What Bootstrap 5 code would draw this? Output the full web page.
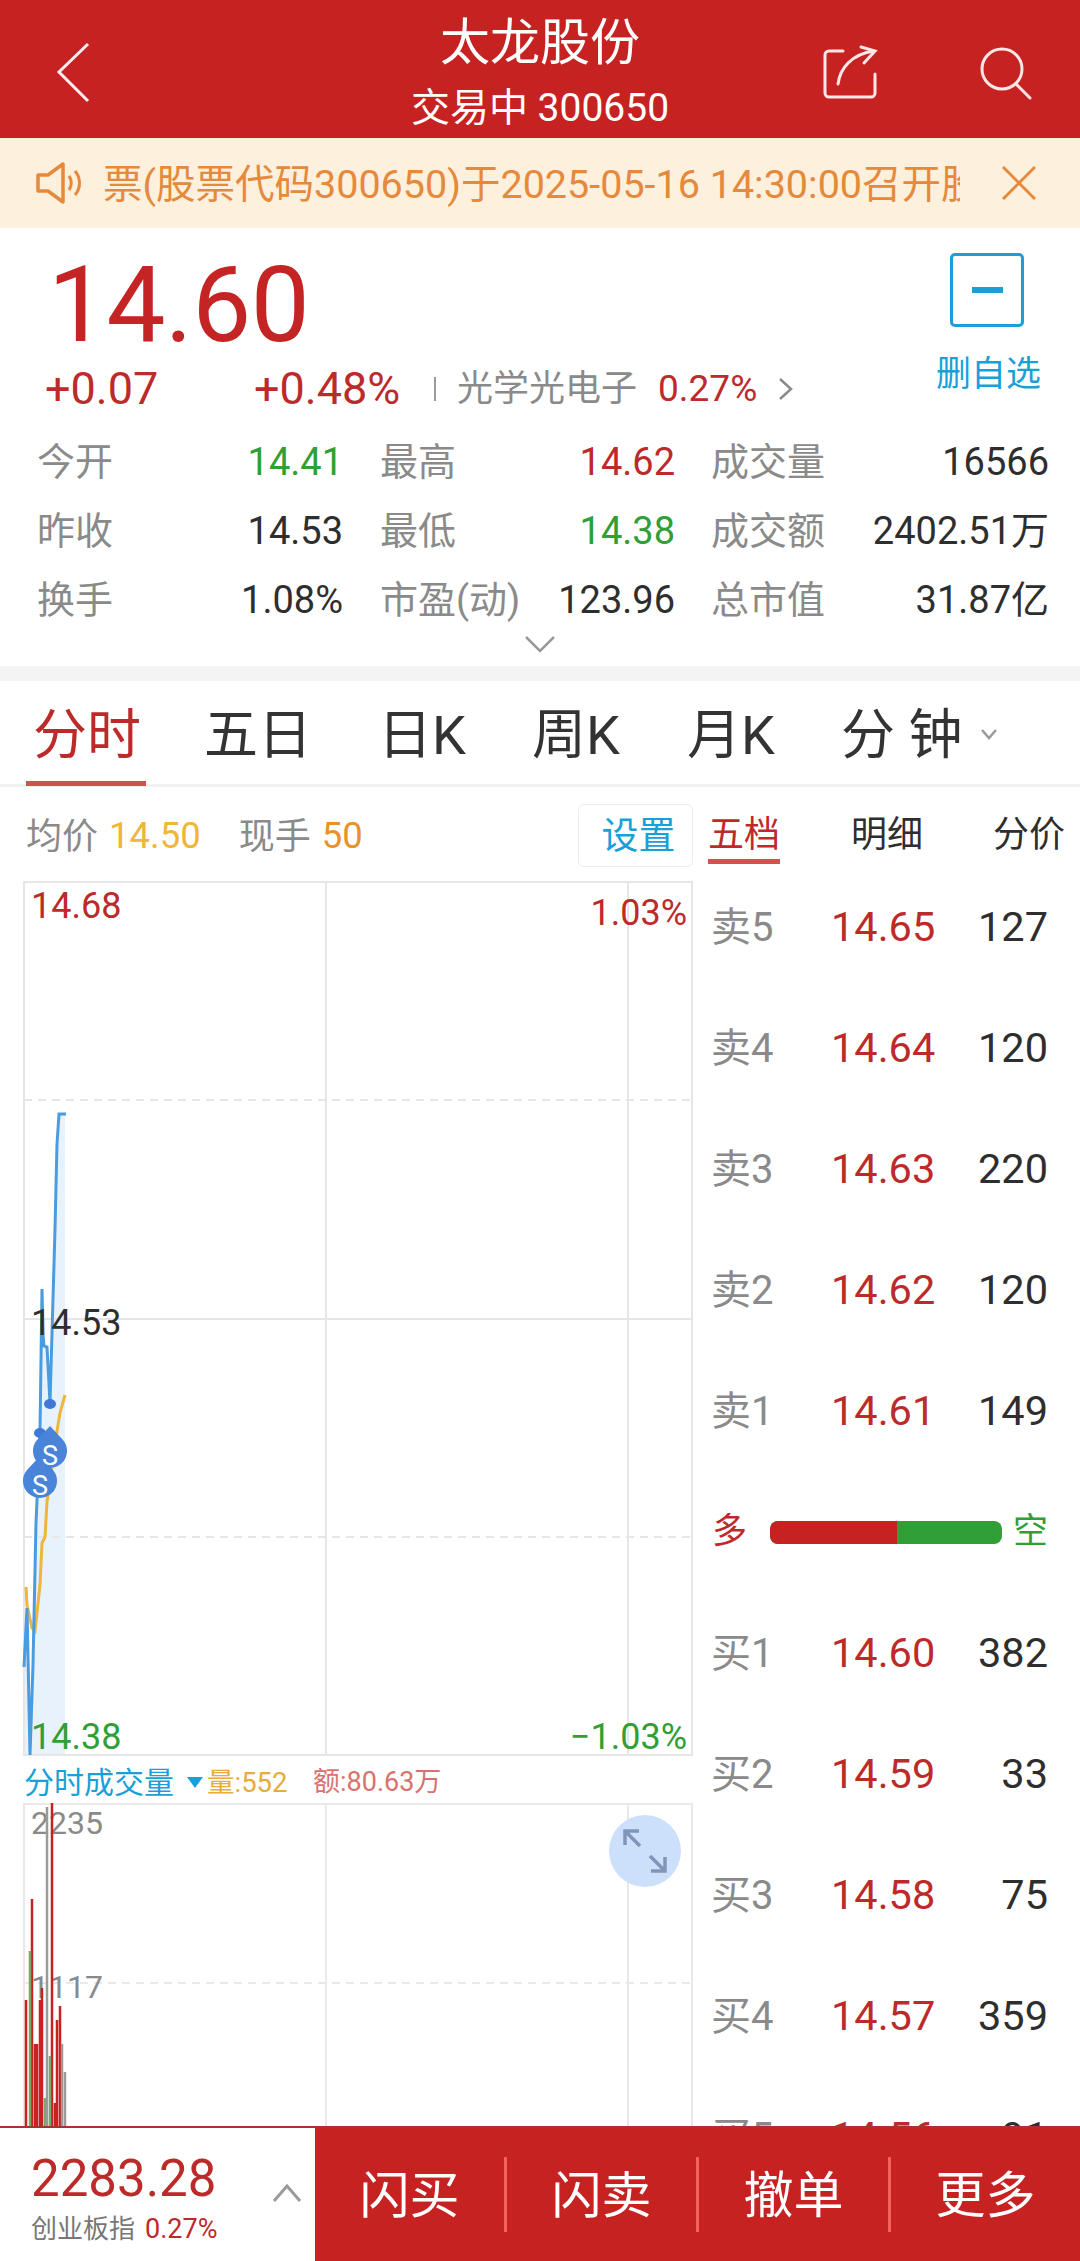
<!DOCTYPE html>
<html lang="zh-CN">
<head>
<meta charset="utf-8">
<title>太龙股份</title>
<link href="https://cdn.jsdelivr.net/npm/bootstrap@5.3.0/dist/css/bootstrap.min.css" rel="stylesheet">
<style>
html,body{margin:0;background:#fff}
body{width:1080px;height:2261px;overflow:hidden;font-family:Roboto,"Noto Sans CJK SC",sans-serif;color:#333}
.app{width:1080px;height:2261px;overflow:hidden;position:relative}
.c-red{color:#bd2a2a}.c-green{color:#2f9f36}.c-gray{color:#8a8a8a}.c-dark{color:#2e2e2e}.c-blue{color:#1a9fd8}
.topbar{height:138px;background:#c62222;color:#fff}
.top-side{width:280px;height:138px;flex:none}
.top-title{font-size:50px;line-height:58px;padding-top:14px}
.top-sub{font-size:39px;line-height:44px;margin-top:14px}
.notice{height:90px;background:#fdf0dc;color:#e5893c;font-size:39.5px;padding-left:36px}
.notice-text{width:857px;margin-left:20px;white-space:nowrap;overflow:hidden;flex:none;padding-top:3px}
.notice-x{margin-left:42px}
.quote{height:438px;padding-top:25px}
.price-big{font-size:105px;line-height:105px;padding-left:48px;letter-spacing:-.5px;color:#c42424}
.change-row{font-size:45px;line-height:50px;height:50px;margin-top:6px}
.chg-a{width:254px;padding-left:45px}
.chg-b{width:180px}
.chg-sep{width:2px;height:24px;background:#9a9a9a;margin-right:21px}
.chg-name{font-size:36px;color:#8a8a8a;width:201px}
.chg-pct{font-size:37px;width:120px;color:#bd2a2a}
.fav-box{position:absolute;left:950px;top:253px;width:74px;height:74px;border:3px solid #1a9fd8;border-radius:5px}
.fav-dash{width:31px;height:6px;background:#1a9fd8}
.fav-label{position:absolute;left:936px;top:353px;font-size:35px;line-height:44px;color:#1a9fd8}
.stats{padding:0 31px 0 37px;margin-top:14px;font-size:38px}
.stat-line{height:69px}
.stat-a{width:306px}
.stat-b{width:295px;margin-left:37px}
.stat-c{width:338px;margin-left:36px}
.more-chev{height:30px}
.gap-band{height:15px;background:#f4f4f4}
.tabs{height:106px;border-bottom:3px solid #f1f1f1;position:relative;font-size:54px;color:#333}
.tab-one{position:absolute;top:23px;line-height:64px;white-space:nowrap}
.tab-chev{position:absolute;left:980px;top:47px}
.tab-line{position:absolute;left:26px;top:100px;width:120px;height:5px;background:#d4504f}
.main-left{width:700px;flex:none}
.main-right{width:380px;flex:none}
.tool-row{height:94px;padding-left:26px;font-size:36px;position:relative;padding-top:5px}
.tool-num-a{color:#eeb63a;font-size:36.5px;margin-left:11px}
.tool-lab-b{margin-left:38px}
.tool-num-b{color:#e8922b;font-size:36.5px;margin-left:11px}
.set-box{position:absolute;left:578px;top:17px;width:115px;height:63px;border:1px solid #ececec;border-radius:6px;font-size:37px;color:#1a9fd8;padding:3px 0 0 6px}
.book-tabs{height:80px;font-size:36px;position:relative}
.book-tab{position:absolute;top:25px;line-height:46px}
.book-line{position:absolute;left:8px;top:72px;width:72px;height:5px;background:#d4504f}
.book-row{height:121px;padding-left:12px;padding-right:32px;font-size:41.5px}
.book-lab{width:119px;font-size:40px;color:#8a8a8a;margin-left:-1px;margin-right:1px}
.book-price{width:120px;color:#bd2a2a;white-space:nowrap}
.book-vol{flex:1;text-align:right;color:#2e2e2e}
.book-mid{font-size:35px}
.ratio{width:233px;height:23px;border-radius:8px;overflow:hidden;margin-left:23px;margin-right:11px;background:#2f9f36}
.ratio-red{width:127px;background:#c62222}
.chart-svg{display:block}
.chart-svg text{font-family:Roboto,"Noto Sans CJK SC",sans-serif}
.vol-head{height:46px;padding-left:24px;font-size:30px;padding-top:5px;white-space:nowrap}
.vol-tri{width:0;height:0;border-left:8px solid transparent;border-right:8px solid transparent;border-top:11px solid #1a9fd8;margin-left:13px;margin-right:4px}
.vol-q{font-size:27.5px;color:#e7ac3c;width:106px}
.vol-a{font-size:27px;color:#d9726f}
.bottom{position:fixed;left:0;bottom:0;width:1080px;height:135px;background:#c62222;border-top:2px solid #a83232}
.idx{width:315px;flex:none;background:#fff;height:100%;padding:21px 0 0 31px;position:relative}
.idx-num{font-size:51px;line-height:60px;color:#bd2a2a}
.idx-sub{font-size:26px;line-height:36px;color:#777;margin-top:2px}
.idx-pct{font-size:27px;margin-left:10px}
.idx-chev{position:absolute;left:272px;top:55px}
.act{height:133px;color:#fff;font-size:50px;padding-top:4px}
.act-a{width:191px}
.act-sep{width:3px;height:75px;background:#f4625a;flex:none}
</style>
</head>
<body>
<div class="app">
  <header class="topbar d-flex">
    <div class="top-side">
      <svg width="280" height="138" viewBox="0 0 280 138"><path d="M88 44 59 72l29 29" fill="none" stroke="#fff" stroke-width="3" stroke-linejoin="miter" opacity=".92"/></svg>
    </div>
    <div class="flex-grow-1 text-center">
      <div class="top-title">太龙股份</div>
      <div class="top-sub">交易中 300650</div>
    </div>
    <div class="top-side">
      <svg width="280" height="138" viewBox="0 0 280 138">
        <path d="M43 51H29a4 4 0 0 0-4 4v38a4 4 0 0 0 4 4h42a4 4 0 0 0 4-4V74" fill="none" stroke="#fde6e6" stroke-width="3" stroke-linecap="round"/>
        <path d="M38 84c2-16 14-30 36-33" fill="none" stroke="#fde6e6" stroke-width="3" stroke-linecap="round"/>
        <path d="M61 47l14 4-11 12" fill="none" stroke="#fde6e6" stroke-width="3" stroke-linecap="round"/>
        <circle cx="202" cy="69" r="20" fill="none" stroke="#fde6e6" stroke-width="3"/>
        <path d="M216 84l14 14" stroke="#fde6e6" stroke-width="3" stroke-linecap="round"/>
      </svg>
    </div>
  </header>

  <div class="notice d-flex align-items-center">
    <svg width="47" height="42" viewBox="0 0 47 42"><path d="M2 13h10L27 2v38L12 29H2z" fill="none" stroke="#e5893c" stroke-width="3.5" stroke-linejoin="round"/><path d="M33 14c3 4 3 10 0 14M39 9c6 7 6 17 0 24" fill="none" stroke="#e5893c" stroke-width="3"/></svg>
    <div class="notice-text">票(股票代码300650)于2025-05-16 14:30:00召开股东大会</div>
    <svg width="34" height="34" viewBox="0 0 34 34" class="notice-x"><path d="M1 1l32 32M33 1 1 33" stroke="#e5893c" stroke-width="3"/></svg>
  </div>

  <section class="quote position-relative">
    <div class="price-big">14.60</div>
    <div class="change-row d-flex align-items-center c-red">
      <div class="chg-a">+0.07</div>
      <div class="chg-b">+0.48%</div>
      <div class="chg-sep"></div>
      <div class="chg-name">光学光电子</div>
      <div class="chg-pct">0.27%</div>
      <svg width="16" height="24" viewBox="0 0 16 24"><path d="M2 2l11 10L2 22" fill="none" stroke="#8a8a8a" stroke-width="2.5"/></svg>
    </div>
    <div class="stats">
      <div class="stat-line d-flex align-items-center">
        <div class="stat-a d-flex justify-content-between"><span class="c-gray">今开</span><span class="c-green">14.41</span></div>
        <div class="stat-b d-flex justify-content-between"><span class="c-gray">最高</span><span class="c-red">14.62</span></div>
        <div class="stat-c d-flex justify-content-between"><span class="c-gray">成交量</span><span class="c-dark">16566</span></div>
      </div>
      <div class="stat-line d-flex align-items-center">
        <div class="stat-a d-flex justify-content-between"><span class="c-gray">昨收</span><span class="c-dark">14.53</span></div>
        <div class="stat-b d-flex justify-content-between"><span class="c-gray">最低</span><span class="c-green">14.38</span></div>
        <div class="stat-c d-flex justify-content-between"><span class="c-gray">成交额</span><span class="c-dark">2402.51万</span></div>
      </div>
      <div class="stat-line d-flex align-items-center">
        <div class="stat-a d-flex justify-content-between"><span class="c-gray">换手</span><span class="c-dark">1.08%</span></div>
        <div class="stat-b d-flex justify-content-between"><span class="c-gray">市盈(动)</span><span class="c-dark">123.96</span></div>
        <div class="stat-c d-flex justify-content-between"><span class="c-gray">总市值</span><span class="c-dark">31.87亿</span></div>
      </div>
    </div>
    <div class="more-chev d-flex justify-content-center">
      <svg width="32" height="18" viewBox="0 0 32 18"><path d="M2 2l14 14L30 2" fill="none" stroke="#9a9a9a" stroke-width="2.5"/></svg>
    </div>
  </section>
  <div class="fav-box d-flex align-items-center justify-content-center"><div class="fav-dash"></div></div>
  <div class="fav-label">删自选</div>

  <div class="gap-band"></div>

  <nav class="tabs">
    <span class="tab-one c-red" style="left:33px">分时</span>
    <span class="tab-one" style="left:204px">五日</span>
    <span class="tab-one" style="left:378px">日K</span>
    <span class="tab-one" style="left:532px">周K</span>
    <span class="tab-one" style="left:687px">月K</span>
    <span class="tab-one" style="left:841px">分 钟</span>
    <svg class="tab-chev" width="18" height="14" viewBox="0 0 18 14"><path d="M2 2l7 8 7-8" fill="none" stroke="#9a9a9a" stroke-width="2.5"/></svg>
    <div class="tab-line"></div>
  </nav>

  <div class="d-flex">
    <div class="main-left">
      <div class="tool-row d-flex align-items-center">
        <span class="c-gray">均价</span><span class="tool-num-a">14.50</span>
        <span class="c-gray tool-lab-b">现手</span><span class="tool-num-b">50</span>
        <div class="set-box d-flex align-items-center justify-content-center">设置</div>
      </div>
      <svg class="chart-svg" width="700" height="876" viewBox="0 881 700 876">
        <polygon points="24,1755 24,1667 27,1608 30,1755 33,1665 36,1523 40,1431 42,1289 43,1335 44,1346 47,1347 50,1403 55,1229 57,1144 59,1114 65,1114 65,1755" fill="#e8f2fc"/>
        <g stroke="#e6e6e6" stroke-width="2" fill="none">
          <rect x="24" y="882" width="668" height="873"/>
          <path d="M326 882v873M628 882v873M24 1319h668"/>
          <path d="M24 1100h668M24 1537h668" stroke-dasharray="8 6"/>
        </g>
        <polyline points="26,1587 27,1605 32,1628 35,1631 40,1585 42,1543 45,1537 47,1502 50,1480 57,1431 60,1413 65,1395" fill="none" stroke="#eeb63a" stroke-width="3"/>
        <polyline points="24,1667 27,1608 30,1755 33,1665 36,1523 40,1431 42,1289 43,1335 44,1346 47,1347 50,1403 55,1229 57,1144 59,1114 66,1114" fill="none" stroke="#4a9ce0" stroke-width="3"/>
        <ellipse cx="40" cy="1433" rx="6" ry="5" fill="#3f78d8"/>
        <ellipse cx="50" cy="1404" rx="6" ry="5" fill="#3f78d8"/>
        <path d="M50 1426l13 14a17 17 0 1 1-26 0z" fill="#4a84d8"/>
        <path d="M40 1456l13 14a17 17 0 1 1-26 0z" fill="#4a84d8"/>
        <text x="50" y="1465" font-size="27" fill="#fff" text-anchor="middle">S</text>
        <text x="40" y="1495" font-size="27" fill="#fff" text-anchor="middle">S</text>
        <g font-size="36">
          <text x="31" y="918" fill="#bd2a2a">14.68</text>
          <text x="687" y="925" fill="#bd2a2a" text-anchor="end">1.03%</text>
          <text x="31" y="1335" fill="#2e2e2e">14.53</text>
          <text x="31" y="1749" fill="#2f9f36">14.38</text>
          <text x="687" y="1749" fill="#2f9f36" text-anchor="end">−1.03%</text>
        </g>
      </svg>
      <div class="vol-head d-flex align-items-center">
        <span class="c-blue">分时成交量</span><span class="vol-tri"></span><span class="vol-q">量:552</span><span class="vol-a">额:80.63万</span>
      </div>
      <svg class="chart-svg" width="700" height="460" viewBox="0 1803 700 460">
        <g stroke="#e9e9e9" stroke-width="2" fill="none">
          <path d="M24 2262V1804h668v458M326 1804v458M628 1804v458"/>
          <path d="M24 1983h668" stroke-dasharray="8 6"/>
        </g>
        <g font-size="32" fill="#8a8a8a">
          <text x="31" y="1834">2235</text>
          <text x="31" y="1998">1117</text>
        </g>
        <g stroke-width="2.5">
          <path d="M26 2126v-126M32 2126v-227M35 2126v-82M37 2126v-82M40 2126v-126M42 2126v-138M52 2126v-324M55 2126v-23M57 2126v-106M60 2126v-120" stroke="#c62222"/>
          <path d="M30 2126v-175M45 2126v-28M50 2126v-70" stroke="#7da567"/>
          <path d="M47 2126v-319M62 2126v-82M65 2126v-54" stroke="#9a9a9a"/>
        </g>
        <circle cx="645" cy="1851" r="36" fill="#cce0fc"/>
        <g fill="none" stroke="#7f96b8" stroke-width="3.5">
          <path d="M625 1845v-14h14M625 1831l15 15"/>
          <path d="M665 1857v14h-14M665 1871l-15-15"/>
        </g>
      </svg>
    </div>
    <div class="main-right">
      <div class="book-tabs">
        <span class="book-tab c-red" style="left:8px">五档</span>
        <span class="book-tab c-dark" style="left:151px">明细</span>
        <span class="book-tab c-dark" style="left:293px">分价</span>
        <div class="book-line"></div>
      </div>
      <div class="book-row d-flex align-items-center"><span class="book-lab">卖5</span><span class="book-price">14.65</span><span class="book-vol">127</span></div>
      <div class="book-row d-flex align-items-center"><span class="book-lab">卖4</span><span class="book-price">14.64</span><span class="book-vol">120</span></div>
      <div class="book-row d-flex align-items-center"><span class="book-lab">卖3</span><span class="book-price">14.63</span><span class="book-vol">220</span></div>
      <div class="book-row d-flex align-items-center"><span class="book-lab">卖2</span><span class="book-price">14.62</span><span class="book-vol">120</span></div>
      <div class="book-row d-flex align-items-center"><span class="book-lab">卖1</span><span class="book-price">14.61</span><span class="book-vol">149</span></div>
      <div class="book-row book-mid d-flex align-items-center">
        <span class="c-red">多</span>
        <div class="ratio d-flex"><div class="ratio-red"></div></div>
        <span class="c-green">空</span>
      </div>
      <div class="book-row d-flex align-items-center"><span class="book-lab">买1</span><span class="book-price">14.60</span><span class="book-vol">382</span></div>
      <div class="book-row d-flex align-items-center"><span class="book-lab">买2</span><span class="book-price">14.59</span><span class="book-vol">33</span></div>
      <div class="book-row d-flex align-items-center"><span class="book-lab">买3</span><span class="book-price">14.58</span><span class="book-vol">75</span></div>
      <div class="book-row d-flex align-items-center"><span class="book-lab">买4</span><span class="book-price">14.57</span><span class="book-vol">359</span></div>
      <div class="book-row d-flex align-items-center"><span class="book-lab">买5</span><span class="book-price">14.56</span><span class="book-vol">91</span></div>
    </div>
  </div>

  <footer class="bottom d-flex">
    <div class="idx">
      <div class="idx-num">2283.28</div>
      <div class="idx-sub">创业板指<span class="c-red idx-pct">0.27%</span></div>
      <svg class="idx-chev" width="30" height="20" viewBox="0 0 30 20"><path d="M2 18 15 3l13 15" fill="none" stroke="#9a9a9a" stroke-width="3"/></svg>
    </div>
    <div class="act act-a d-flex align-items-center justify-content-center">闪买</div>
    <div class="act-sep align-self-center"></div>
    <div class="act act-a d-flex align-items-center justify-content-center">闪卖</div>
    <div class="act-sep align-self-center"></div>
    <div class="act act-a d-flex align-items-center justify-content-center">撤单</div>
    <div class="act-sep align-self-center"></div>
    <div class="act act-a d-flex align-items-center justify-content-center">更多</div>
  </footer>
</div>
<script src="https://cdn.jsdelivr.net/npm/bootstrap@5.3.0/dist/js/bootstrap.bundle.min.js"></script>
</body>
</html>
